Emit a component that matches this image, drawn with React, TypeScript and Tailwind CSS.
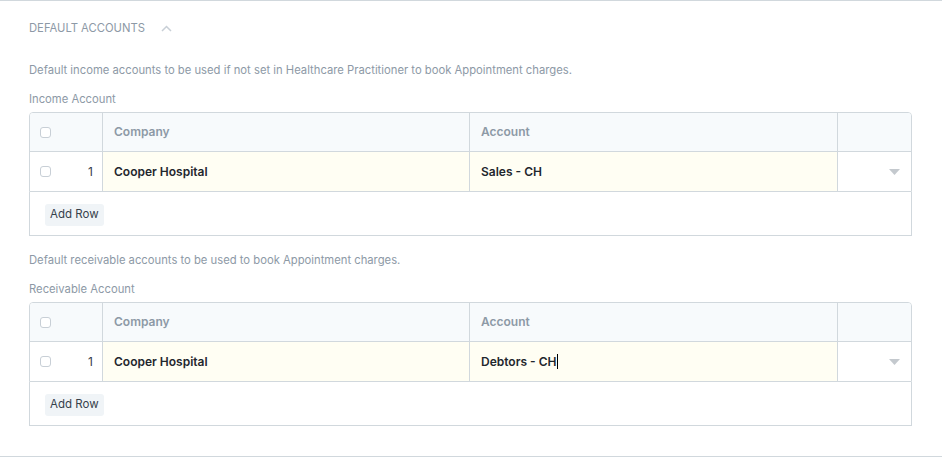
import React from "react";

type Row = { company: string; account: string; editing?: boolean };

const Check = () => (
  <span className="inline-block w-[11px] h-[11px] rounded-[3px] border border-[#c8cfd6] bg-white" />
);

function ChildTable({ row }: { row: Row }) {
  return (
    <div className="w-full">
      <div className="border border-[#d1d8dd] rounded-t-[4px] overflow-hidden">
        <div className="grid grid-cols-[72px_367px_368px_1fr] h-[39px] bg-[#f7fafc] border-b border-[#d1d8dd] text-[12px] font-semibold text-[#8d99a6]">
          <div className="flex items-center pl-[10px]">
            <Check />
          </div>
          <div className="flex items-center pl-[11px] border-l border-[#d1d8dd]">Company</div>
          <div className="flex items-center pl-[11px] border-l border-[#d1d8dd]">Account</div>
          <div className="border-l border-[#d1d8dd]" />
        </div>
        <div className="grid grid-cols-[72px_367px_368px_1fr] h-[39px] text-[12px] font-semibold text-[#1f272e]">
          <div className="flex items-center pl-[10px] pr-[9px] justify-between">
            <Check />
            <span className="font-normal text-[#36414c]">1</span>
          </div>
          <div className="flex items-center pl-[11px] border-l border-[#d1d8dd] bg-[#fffef3]">{row.company}</div>
          <div className="flex items-center pl-[11px] border-l border-[#d1d8dd] bg-[#fffef3]">
            {row.account}
            {row.editing && <span className="inline-block w-px h-[15px] bg-black ml-px" />}
          </div>
          <div className="flex items-center justify-end pr-[11px] border-l border-[#d1d8dd]">
            <svg width="11" height="6" viewBox="0 0 11 6">
              <path d="M0 0h11L5.5 6z" fill="#c4c9ce" />
            </svg>
          </div>
        </div>
      </div>
      <div className="h-[44px] border border-t-0 border-[#d1d8dd] flex items-center pl-[15px] pt-[2px]">
        <button className="h-[22px] px-[5px] rounded-[3px] bg-[#f0f4f7] text-[11.5px] text-[#36414c]">
          Add Row
        </button>
      </div>
    </div>
  );
}

export default function App() {
  return (
    <div
      className="w-[942px] h-[457px] bg-white border-t border-b border-[#d1d8dd] pl-[29px] pr-[30px] text-[11.25px] text-[#8d99a6]"
      style={{ fontFamily: "Inter, 'Noto Sans', sans-serif" }}
    >
      <div className="flex items-center gap-[16px] pt-[19px] h-[35px]">
        <span className="leading-4">DEFAULT ACCOUNTS</span>
        <svg width="11" height="7" viewBox="0 0 11 7">
          <path d="M1 6l4.5-4.5L10 6" fill="none" stroke="#c8cfd6" strokeWidth="1.5" />
        </svg>
      </div>
      <p className="mt-[26px] leading-4">
        Default income accounts to be used if not set in Healthcare Practitioner to book Appointment charges.
      </p>
      <p className="mt-[13px] leading-4">Income Account</p>
      <div className="mt-[5px]">
        <ChildTable row={{ company: "Cooper Hospital", account: "Sales - CH" }} />
      </div>
      <p className="mt-[16px] leading-4">Default receivable accounts to be used to book Appointment charges.</p>
      <p className="mt-[13px] leading-4">Receivable Account</p>
      <div className="mt-[5px]">
        <ChildTable row={{ company: "Cooper Hospital", account: "Debtors - CH", editing: true }} />
      </div>
    </div>
  );
}
